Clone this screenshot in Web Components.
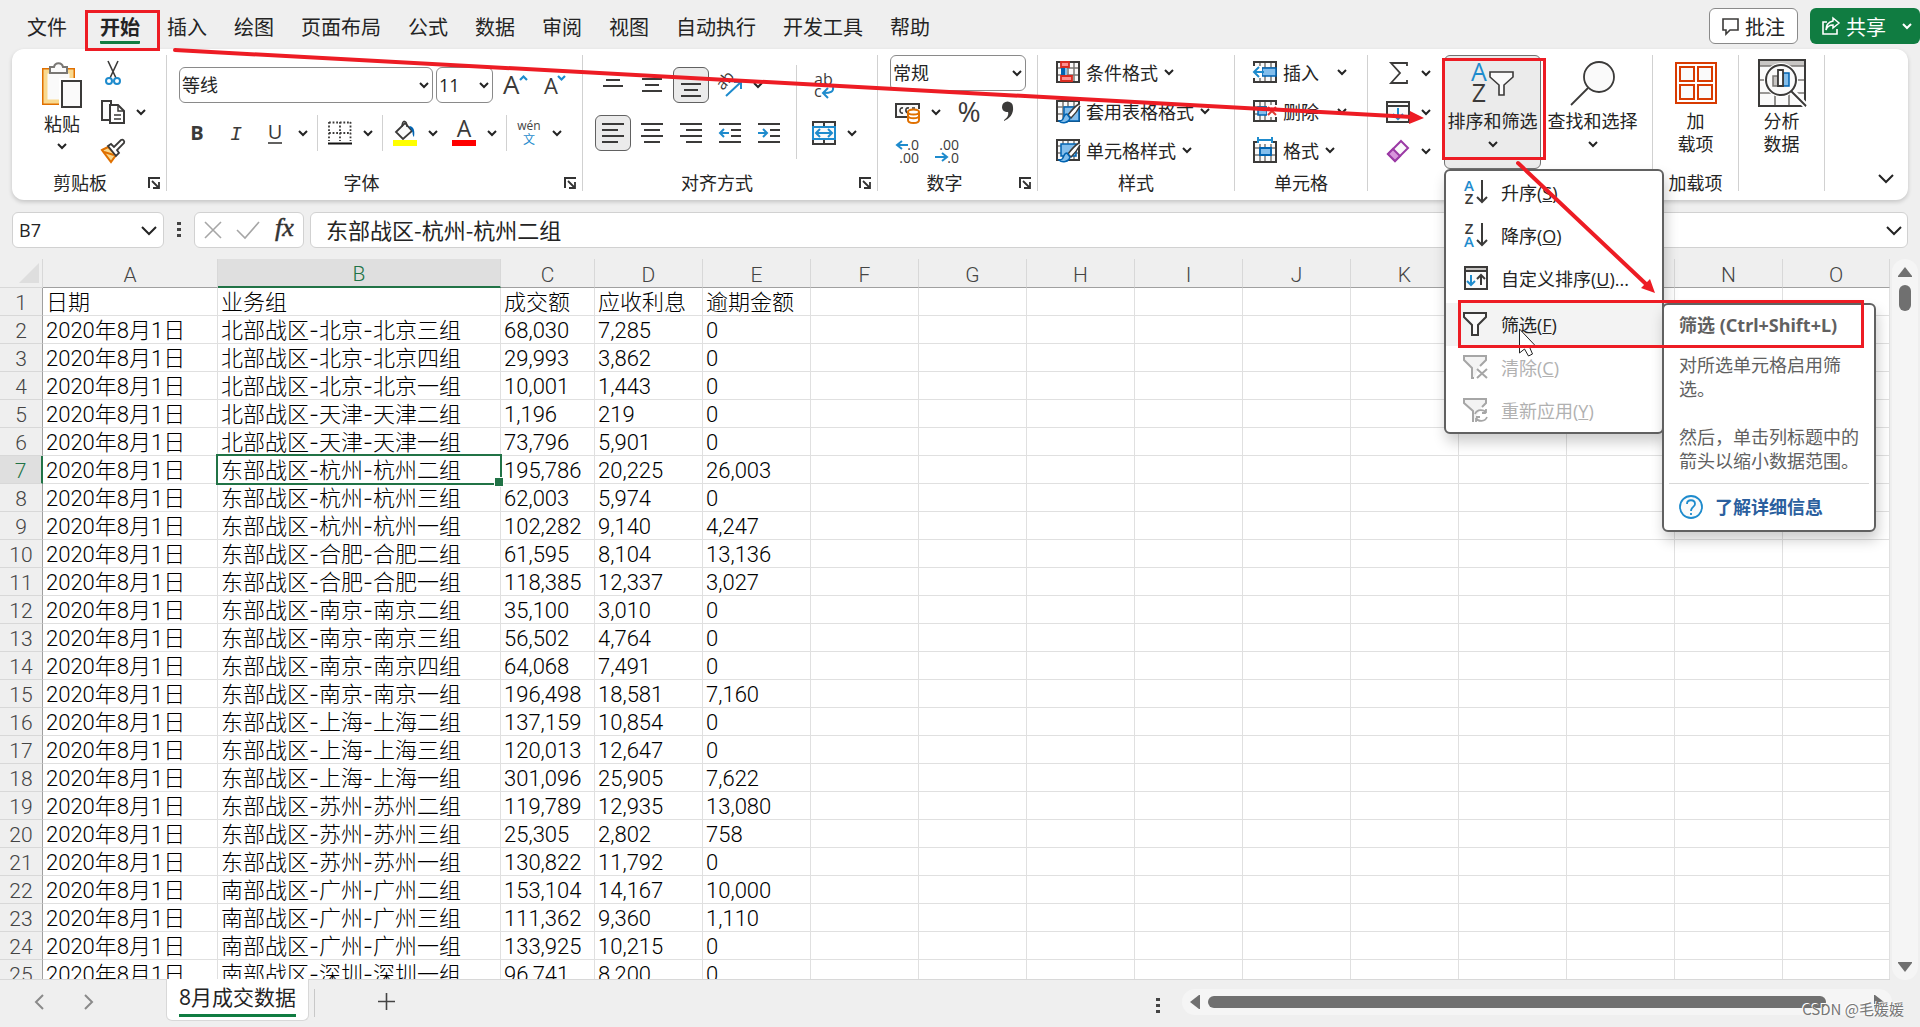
<!DOCTYPE html>
<html lang="zh-CN">
<head>
<meta charset="utf-8">
<title>8月成交数据</title>
<style>
html,body{margin:0;height:100%}
body{font-family:"Open Sans","Noto Sans CJK SC",sans-serif;font-size:18px;color:#242424;background:#efefef;overflow:hidden;
--cjk:"Noto Sans CJK SC",sans-serif;--green:#107c41}
</style>
</head>
<body>
<excel-app></excel-app>
<script>
const K='#3b3a39',B='#1e8bcd';
const grid='<path d="M1 2h22v20h-22zM1 8h22M1 15h22M7 2v20M12 2v20M18 2v20" fill="#fafafa" stroke="#797774" stroke-width="1.5"/><path d="M1 2h22v20h-22z" fill="none" stroke="#3b3a39" stroke-width="2"/>';
const brush='<path d="M23 5c-5 3-8 7-11 11l3 3c4-4 7-8 9-12" fill="#fff" stroke="#3b3a39" stroke-width="1.5"/><path d="M11 15c-3 0-3 3-4 5c-1 2-2 2-4 2c3 3 10 2 11-3z" fill="#83beec" stroke="#0063b1" stroke-width="1.5"/>';
const lines=(a)=>a.map(([x,y,w])=>`<path d="M${x} ${y}h${w}" stroke="${K}" stroke-width="2"/>`).join('');
const funnel=(c,f)=>`<path d="M1 2h22v4l-8 8v10h-6v-10l-8-8z" fill="${f}" stroke="${c}" stroke-width="2"/>`;
const down='<path d="M19 1v22M14 18l5 5l5-5" fill="none" stroke="#3b3a39" stroke-width="2"/>';
const ICONS={
chev:[10,6,'<path d="M1 1l4 4l4-4" fill="none" stroke="currentColor" stroke-width="2"/>'],
chevL:[16,9,'<path d="M1 1l7 7l7-7" fill="none" stroke="currentColor" stroke-width="2"/>'],
prev:[9,16,'<path d="M8 1l-7 7l7 7" fill="none" stroke="#8a8a8a" stroke-width="2"/>'],
next:[9,16,'<path d="M1 1l7 7l-7 7" fill="none" stroke="#8a8a8a" stroke-width="2"/>'],
plus:[17,17,'<path d="M8.500 0v17M0 8.500h17" stroke="#444" stroke-width="1.600"/>'],
dots:[4,16,'<path d="M0 0h4v3h-4zM0 6h4v3h-4zM0 12h4v3h-4z" fill="#444"/>'],
launch:[12,12,'<path d="M1 11v-10h11" fill="none" stroke="#333" stroke-width="2"/><path d="M4 4l7 7M11 5v6h-6" fill="none" stroke="#333" stroke-width="1.800"/>'],
paste:[42,46,'<path d="M2 7h31v35h-31z" fill="#fff" stroke="#e07000" stroke-width="2"/><path d="M4.500 9.500h26v30h-26z" fill="#fafafa" stroke="#f9d98f" stroke-width="4"/><path d="M9 11v-6h4c1-5 8-5 9 0h4v6z" fill="#fafafa" stroke="#797774" stroke-width="2"/><path d="M18 16h24v30h-24z" fill="#fff"/><path d="M21 19h19v26h-19z" fill="#fafafa" stroke="#3b3a39" stroke-width="2"/>'],
cut:[16,24,'<path d="M3 0l8 17M13 0l-8 17" stroke="#3b3a39" stroke-width="1.600" fill="none"/><circle cx="4" cy="20" r="3" fill="none" stroke="#1e8bcd" stroke-width="2"/><circle cx="12" cy="20" r="3" fill="none" stroke="#1e8bcd" stroke-width="2"/>'],
copy:[24,24,'<path d="M8 20h-7v-19h9v3" fill="#fafafa" stroke="#3b3a39" stroke-width="2"/><path d="M9 5h8l6 6v12h-14z" fill="#fff" stroke="#3b3a39" stroke-width="2"/><path d="M17 5v6h6M13 15h7M13 19h7" fill="none" stroke="#3b3a39" stroke-width="1.500"/>'],
brush:[24,24,'<path d="M1 11l6-3l8 8l-5 7z" fill="#f9d98f" stroke="#e07000" stroke-width="2"/><path d="M3 13l10 3" stroke="#e07000" stroke-width="2"/><path d="M7 7l3-2l3 3l7-7c2-1 4 1 3 3l-7 7l2 3l-3 3z" fill="#fff" stroke="#3b3a39" stroke-width="1.800"/>'],
growA:[24,26,'<text x="1" y="22" font-size="26" fill="#3b3a39">A</text><path d="M18 8l3.500-3.500l3.500 3.500" fill="none" stroke="#1e8bcd" stroke-width="2.200"/>'],
shrinkA:[24,26,'<text x="3" y="22" font-size="22" fill="#3b3a39">A</text><path d="M17 4l3.500 3.500l3.500-3.500" fill="none" stroke="#1e8bcd" stroke-width="2.200"/>'],
bold:[24,24,'<text x="12" y="19" font-size="20" font-weight="700" text-anchor="middle" fill="#3b3a39">B</text>'],
italic:[24,24,'<text x="12" y="19" font-size="20" font-style="italic" font-family="Liberation Mono" text-anchor="middle" fill="#3b3a39">I</text>'],
under:[24,26,'<text x="12" y="19" font-size="20" text-anchor="middle" fill="#3b3a39">U</text><path d="M5 23h14" stroke="#3b3a39" stroke-width="1.600"/>'],
border:[24,24,'<path d="M1 1.500h22M1 12h22M1 1v19M12 1v19M22.500 1v19" stroke="#3b3a39" stroke-width="1.800" stroke-dasharray="1.800 1.800" fill="none"/><path d="M0 22.500h24" stroke="#111" stroke-width="2"/>'],
fill:[26,26,'<path d="M4 12l9-9l7 8l-9 8z" fill="#fafafa" stroke="#3b3a39" stroke-width="1.800"/><path d="M10 7c0-8 5-7 5 0" fill="none" stroke="#3b3a39" stroke-width="1.500"/><path d="M17 6c5 0 6 5 5 11c-2-2-1-5-2-6z" fill="#0063b1"/><path d="M1 20h24v6h-24z" fill="#ff0"/>'],
fontA:[26,26,'<text x="13" y="17" font-size="23" text-anchor="middle" fill="#3b3a39">A</text><path d="M1 20h24v6h-24z" fill="red"/>'],
wen:[26,28,'<text x="13" y="11" font-size="12" text-anchor="middle" fill="#444">wén</text><text x="13" y="25" font-size="12" text-anchor="middle" fill="#1e8bcd">文</text>'],
aTop:[24,24,lines([[2,1,20],[5,7,14],[2,13,20]])],
aMid:[24,24,lines([[2,6,20],[5,12,14],[2,18,20]])],
aBot:[24,24,lines([[2,11,20],[5,17,14],[2,23,20]])],
aLeft:[24,24,lines([[1,3,22],[1,9,16],[1,15,22],[1,21,16]])],
aCen:[24,24,lines([[1,3,22],[4,9,16],[1,15,22],[4,21,16]])],
aRight:[24,24,lines([[1,3,22],[7,9,16],[1,15,22],[7,21,16]])],
outd:[24,24,lines([[1,3,22],[13,9,10],[13,15,10],[1,21,22]])+'<path d="M11 12h-9M6 8l-4 4l4 4" fill="none" stroke="#1e8bcd" stroke-width="2"/>'],
ind:[24,24,lines([[1,3,22],[13,9,10],[13,15,10],[1,21,22]])+'<path d="M1 12h9M6 8l4 4l-4 4" fill="none" stroke="#1e8bcd" stroke-width="2"/>'],
orient:[26,26,'<text x="0" y="0" font-size="16" transform="translate(6 19) rotate(-50)" fill="#3b3a39">ab</text><path d="M9 24l15-14M17 10h7v7" fill="none" stroke="#1e8bcd" stroke-width="2"/>'],
wrap:[24,28,'<text x="2" y="14" font-size="16" fill="#3b3a39">ab</text><text x="2" y="26" font-size="16" fill="#3b3a39">c</text><path d="M21 16c1 5-3 6-9 6M16 17l-5 5l5 5" fill="none" stroke="#1e8bcd" stroke-width="2"/>'],
merge:[24,24,'<path d="M1 1h22v22h-22zM12 1v4M12 19v4" fill="#fafafa" stroke="#3b3a39" stroke-width="2"/><path d="M1 6h22v12h-22z" fill="#fafafa" stroke="#1e8bcd" stroke-width="2"/><path d="M5 12h14M8 8l-4 4l4 4M16 8l4 4l-4 4" fill="none" stroke="#1e8bcd" stroke-width="2"/>'],
money:[26,24,'<path d="M12 17h-11v-13h23v5" fill="#fafafa" stroke="#3b3a39" stroke-width="2"/><path d="M8 8c-4-1-4 6 0 5M13 13c-3-1-3-6 1-5M20 8h-3" fill="none" stroke="#3b3a39" stroke-width="1.600"/><path d="M13 12v8c0 4 11 4 11 0v-8" fill="#fff" stroke="#e07000" stroke-width="2"/><ellipse cx="18.500" cy="12" rx="5.500" ry="2.500" fill="#fff" stroke="#e07000" stroke-width="2"/><path d="M13 16c1 3 10 3 11 0" fill="none" stroke="#e07000" stroke-width="2"/>'],
pct:[28,26,'<text x="16" y="23" font-size="28" text-anchor="middle" fill="#3b3a39">%</text>'],
comma:[14,22,'<path d="M3 6a5 5 0 0 1 11 0c1 7-4 12-9 14v-1c3-2 5-5 4-8c-4 0-6-2-6-5z" fill="#3b3a39"/>'],
dec1:[26,26,'<path d="M13 7h-11M7 3l-5 4l5 4" fill="none" stroke="#1e8bcd" stroke-width="2"/><text x="24" y="12" font-size="14" text-anchor="end" fill="#3b3a39">.0</text><text x="24" y="25" font-size="14" text-anchor="end" fill="#3b3a39">.00</text>'],
dec2:[26,26,'<path d="M1 19h12M8 15l5 4l-5 4" fill="none" stroke="#1e8bcd" stroke-width="2"/><text x="25" y="12" font-size="14" text-anchor="end" fill="#3b3a39">.00</text><text x="25" y="25" font-size="14" text-anchor="end" fill="#3b3a39">.0</text>'],
cond:[24,24,grid+'<path d="M5 8h6v7h-6z" fill="#83beec"/><path d="M5 8h4v7h-4z" fill="#0063b1"/><path d="M5 2h8v5h-8zM5 16h11v5h-11z" fill="#ff8f8f" stroke="#d92c20" stroke-width="1.800"/>'],
tblfmt:[25,24,grid+'<path d="M8 8h15v14h-15z" fill="#83beec" stroke="#0063b1" stroke-width="1.500"/>'+brush],
cellfmt:[25,24,grid+'<path d="M5 6h15v12h-15z" fill="#83beec" stroke="#0063b1" stroke-width="1.500"/>'+brush],
ins:[24,24,grid+'<path d="M9 8h14v8h-14z" fill="#83beec" stroke="#0063b1" stroke-width="1.500"/><path d="M0 6h9v12h-9z" fill="#fff"/><path d="M11 12h-10M6 7l-5 5l5 5" fill="none" stroke="#1e8bcd" stroke-width="2"/>'],
del:[24,24,grid+'<path d="M5 8h9v8h-9z" fill="#83beec" stroke="#0063b1" stroke-width="1.500"/><path d="M14 6h10v12h-10z" fill="#fff"/><path d="M15 8l8 8M23 8l-8 8" stroke="#e03a32" stroke-width="2"/>'],
fmt:[24,26,'<g transform="translate(0 3)">'+grid+'<path d="M7 8h11v7h-11z" fill="#83beec" stroke="#0063b1" stroke-width="1.800"/></g><path d="M4 0h16v7h-16z" fill="#fff"/><path d="M5 0v6M19 0v6M5 3h14" fill="none" stroke="#1e8bcd" stroke-width="2"/>'],
sum:[20,22,'<path d="M19 4v-3h-16l9 10l-9 10h16v-3" fill="none" stroke="#3b3a39" stroke-width="1.800"/>'],
filld:[24,22,'<path d="M1 1h22v20h-22zM1 5h22" fill="#fafafa" stroke="#3b3a39" stroke-width="2"/><path d="M12 7v11M7 13l5 5l5-5" fill="none" stroke="#1e8bcd" stroke-width="2"/>'],
erase:[24,24,'<path d="M15 2l7 7l-13 13l-7-7z" fill="#fafafa" stroke="#9b3aa5" stroke-width="2"/><path d="M7 10l7 7l-5 5l-7-7z" fill="#d895dc" stroke="#9b3aa5" stroke-width="2"/>'],
sort:[44,44,'<text x="8" y="20" font-size="25" text-anchor="middle" fill="#1e8bcd">A</text><text x="8" y="41" font-size="25" text-anchor="middle" fill="#3b3a39">Z</text><path d="M19 11h23v5l-9 8v10h-5v-10l-9-8z" fill="#fafafa" stroke="#3b3a39" stroke-width="1.600"/>'],
find:[46,46,'<circle cx="29" cy="17" r="15" fill="#fafafa" stroke="#3b3a39" stroke-width="1.800"/><path d="M18 28l-17 17" stroke="#3b3a39" stroke-width="1.800"/>'],
addin:[42,42,'<path d="M1 1h40v40h-40z" fill="#fff" stroke="#d83b01" stroke-width="2"/><path d="M5 5h14v14h-14zM23 5h14v14h-14zM5 23h14v14h-14zM23 23h14v14h-14z" fill="#fafafa" stroke="#d83b01" stroke-width="2"/>'],
analyze:[48,48,'<path d="M1 1h46v46h-46z" fill="#fafafa"/><path d="M1 1h46v6h-46z" fill="#c8c6c4"/><path d="M1 7h46M1 21h46M1 34h46M17 34v13M31 34v13" stroke="#797774" stroke-width="1.600" fill="none"/><path d="M1 1h46v46h-46z" fill="none" stroke="#3b3a39" stroke-width="2"/><circle cx="23" cy="21" r="17" fill="#fff"/><path d="M33 31l15 16" stroke="#fff" stroke-width="6"/><circle cx="23" cy="21" r="15" fill="#fafafa" stroke="#3b3a39" stroke-width="2"/><path d="M33 32l15 15" stroke="#3b3a39" stroke-width="2"/><path d="M15 17h5v10h-5z" fill="#c8c6c4" stroke="#797774" stroke-width="1.500"/><path d="M25 14h6v13h-6z" fill="#83beec" stroke="#0063b1" stroke-width="1.500"/><path d="M20 11h5v16h-5z" fill="#fff" stroke="#3b3a39" stroke-width="1.800"/>'],
note:[17,17,'<path d="M1 1h15v11h-8l-4 4v-4h-3z" fill="none" stroke="#3b3a39" stroke-width="1.600"/>'],
share:[18,18,'<path d="M5 5h-4v12h14v-5" fill="none" stroke="#fff" stroke-width="1.600"/><path d="M11 1l6 5l-6 5v-3c-4 0-6 2-7 5c0-5 3-8 7-9z" fill="none" stroke="#fff" stroke-width="1.500"/>'],
asc:[26,26,'<text x="6" y="12" font-size="15" font-weight="600" text-anchor="middle" fill="#1e8bcd">A</text><text x="6" y="25" font-size="15" font-weight="600" text-anchor="middle" fill="#3b3a39">Z</text>'+down],
desc:[26,26,'<text x="6" y="12" font-size="15" font-weight="600" text-anchor="middle" fill="#3b3a39">Z</text><text x="6" y="25" font-size="15" font-weight="600" text-anchor="middle" fill="#1e8bcd">A</text>'+down],
custom:[26,26,'<path d="M2 2h22v22h-22z" fill="#fafafa"/><path d="M2 2h22v4h-22z" fill="#c8c6c4"/><path d="M2 2h22v22h-22zM2 6h22" fill="none" stroke="#3b3a39" stroke-width="2"/><path d="M8 10v10M4 16l4 4l4-4" fill="none" stroke="#1e8bcd" stroke-width="2"/><path d="M18 20v-10M14 14l4-4l4 4" fill="none" stroke="#3b3a39" stroke-width="2"/>'],
filter:[26,26,funnel(K,'#fafafa')],
clear:[26,26,'<path d="M11 24h-2v-10l-8-8v-4h22v4l-6 6" fill="#f3f3f3" stroke="#a6a6a6" stroke-width="2"/><path d="M14 15l10 9M24 15l-10 9" stroke="#a6a6a6" stroke-width="2"/>'],
reapply:[26,26,'<path d="M10 25v-11l-9-8v-4h22v4l-4 4" fill="#f3f3f3" stroke="#a6a6a6" stroke-width="2"/><path d="M12 17c2-5 9-5 11-1v-4M23 16h-4M24 20c-2 5-9 5-11 1v4M13 20h4" fill="none" stroke="#a6a6a6" stroke-width="1.800"/>'],
help:[24,24,'<circle cx="12" cy="12" r="11" fill="#fafafa" stroke="#1e8bcd" stroke-width="1.800"/><path d="M8 9c0-5 8-5 8 0c0 3-4 3-4 7M12 18v2" fill="none" stroke="#1e8bcd" stroke-width="1.800"/>'],
cross:[18,18,'<path d="M1 1l16 16M17 1l-16 16" stroke="#a6a6a6" stroke-width="1.600"/>'],
check:[24,18,'<path d="M1 9l8 8l14-16" fill="none" stroke="#a6a6a6" stroke-width="1.600"/>'],
fx:[22,26,'<text x="1" y="19" font-size="26" font-style="italic" font-family="Liberation Serif" fill="#333" stroke="#333" stroke-width=".5">fx</text>'],
up:[14,10,'<path d="M7 0l7 9v1h-14v-1z" fill="#707070"/>'],
dn:[14,10,'<path d="M7 10l7-9v-1h-14v1z" fill="#707070"/>'],
lf:[10,14,'<path d="M0 7l9-7h1v14h-1z" fill="#707070"/>'],
rt:[10,14,'<path d="M10 7l-9-7h-1v14h1z" fill="#707070"/>'],
selall:[20,20,'<path d="M20 0v20h-20z" fill="#dedede"/>']
};
function define(name,render){
  customElements.define(name,class extends HTMLElement{
    connectedCallback(){
      if(this.shadowRoot)return;
      this.attachShadow({mode:'open'}).innerHTML=render(this);
    }
  });
}
const ic=(n)=>`<ui-icon name="${n}"></ui-icon>`;
const base='button{font:inherit;color:inherit;background:none;border:0;padding:0;margin:0;display:flex;align-items:center;justify-content:center}*{box-sizing:border-box}';

define('ui-icon',el=>{
  const [w,h,body]=ICONS[el.getAttribute('name')];
  return `<style>:host{display:inline-flex;flex:none}svg{display:block;overflow:visible}</style><svg width="${w}" height="${h}" viewBox="0 0 ${w} ${h}" aria-hidden="true">${body}</svg>`;
});

/* A square command button, with an optional drop-down arrow beside it. */
define('tool-button',el=>`<style>${base}:host{display:flex;height:36px}
.main{width:36px;border-radius:6px;border:1px solid transparent}
.main[aria-pressed=true]{background:#ebebeb;border-color:#616161}
.more{width:20px}</style>
<button class="main" aria-label="${el.title}" aria-pressed="${el.hasAttribute('pressed')}">${ic(el.getAttribute('icon'))}</button>${el.hasAttribute('more')?`<button class="more" aria-label="更多">${ic('chev')}</button>`:''}`);

/* A command with its caption to the right of the icon. */
define('row-button',el=>`<style>${base}:host{display:flex;height:36px}
button{padding:0 6px 2px;gap:6px;white-space:nowrap;justify-content:flex-start}
:host([wide]) button{width:106px}:host([wide]) .c{margin-left:auto}
.i{width:24px;display:flex;justify-content:center}.c{display:flex}</style>
<button><span class="i">${ic(el.getAttribute('icon'))}</span><slot></slot><span class="c">${ic('chev')}</span></button>`);

/* A tall command with its caption below the icon. */
define('big-button',el=>`<style>${base}:host{display:flex}
button{flex-direction:column;justify-content:flex-start;width:97px;height:114px;border:1px solid transparent;border-radius:6px;line-height:23px;text-align:center;white-space:nowrap}
.i{height:48px;margin:3px 0;display:flex;align-items:center}
:host([active]) button{background:#ebebeb;border-color:#717171}
ui-icon.c{margin-top:8px}:host([slim]) button{width:50px}</style>
<button><span class="i">${ic(el.getAttribute('icon'))}</span><span><slot></slot></span>${el.hasAttribute('more')?'<ui-icon class="c" name="chev"></ui-icon>':''}</button>`);

define('ribbon-group',el=>`<style>${base}:host{display:flex;flex-direction:column;height:136px;border-right:1px solid #d1d1d1;box-sizing:border-box;flex:none}
.b{flex:1;display:flex;min-height:0}.f{display:flex;height:16px;line-height:16px;align-items:center}
.f span{flex:1;text-align:center}.f button{width:26px;padding-left:2px}</style>
<div class="b"><slot></slot></div>
<div class="f"><span>${el.getAttribute('label')||''}</span>${el.hasAttribute('launch')?`<button aria-label="对话框">${ic('launch')}</button>`:''}</div>`);

define('combo-box',el=>`<style>*{box-sizing:border-box}:host{display:block}
label{display:grid;align-items:center;height:36px;border:1px solid #8a8a8a;border-radius:6px;background:#fff}
select{grid-area:1/1;appearance:none;font:inherit;color:inherit;border:0;background:none;width:100%;height:34px;padding:0 2px;outline:0}
ui-icon{grid-area:1/1;justify-self:end;margin-right:3px;pointer-events:none}</style>
<label><select aria-label="${el.getAttribute('name')}"><option>${el.getAttribute('value')}</option></select>${ic('chev')}</label>`);

define('tab-bar',()=>`<style>${base}:host{display:flex;height:49px;align-items:flex-start;justify-content:space-between;font-size:20px}
nav{display:flex;gap:27px;padding:12px 27px}nav button{height:32px;line-height:30px;border-bottom:3px solid transparent;padding-top:2px}
nav button.on{font-weight:700;border-color:var(--green);border-radius:1px;margin-left:6px}
.r{display:flex;gap:12px;padding-top:8px}.r button{height:36px;border-radius:6px;gap:6px;padding:0 12px}
.n{border:1px solid #8a8a8a;background:#fff}.r .s{background:var(--green);color:#fff;width:110px;padding:0 8px 0 12px}.s ui-icon:last-child{margin-left:auto}</style>
<nav>${['文件','开始','插入','绘图','页面布局','公式','数据','审阅','视图','自动执行','开发工具','帮助'].map(t=>`<button class="${t==='开始'?'on':''}">${t}</button>`).join('')}</nav>
<div class="r"><button class="n">${ic('note')}批注</button><button class="s">${ic('share')}共享${ic('chev')}</button></div>`);

define('ribbon-bar',()=>`<style>${base}:host{display:flex;margin:0 12px;height:151px;padding:6px 8px 0;box-sizing:border-box;background:#fff;border-radius:12px;box-shadow:0 2px 4px rgba(0,0,0,.18);position:relative;z-index:5}
.col{display:flex;flex-direction:column}.row{display:flex;gap:3px}
.two{gap:12px;padding:12px 0 0 12px}.three{gap:3px}.pl{padding-left:12px}.flush{padding-left:0}
.v{width:1px;background:#d1d1d1;margin:0 1px}
.clip{width:147px}.font{width:416px}.align{width:295px}.num{width:160px}.style{width:197px}.cell{width:133px}.edit{width:285px}.one{width:86px}
.paste{flex-direction:column;width:60px;height:114px;margin:0 3px 0 12px;justify-content:flex-start;padding-top:7px;line-height:32px}
.paste ui-icon:last-child{margin-top:3px}
.c1{width:254px}.c2{width:57px}.c3{width:136px}
.tall{height:94px;margin:10px 9px 0}
.anchor{position:relative;margin:0 3px 0 8px}
.anchor drop-menu{position:absolute;left:0;top:114px}
.mid{display:flex;flex:1;justify-content:center}
.end{margin:119px 6px 0 auto;height:9px}</style>
<ribbon-group class="clip" label="剪贴板" launch>
 <button class="paste">${ic('paste')}<span>粘贴</span>${ic('chev')}</button>
 <div class="col three"><tool-button icon="cut" title="剪切"></tool-button><tool-button icon="copy" title="复制" more></tool-button><tool-button icon="brush" title="格式刷"></tool-button></div>
</ribbon-group>
<ribbon-group class="font" label="字体" launch><div class="col two">
 <div class="row"><combo-box class="c1" name="字体" value="等线"></combo-box><combo-box class="c2" name="字号" value="11"></combo-box><tool-button icon="growA" title="增大字号"></tool-button><tool-button icon="shrinkA" title="减小字号"></tool-button></div>
 <div class="row"><tool-button icon="bold" title="加粗"></tool-button><tool-button icon="italic" title="倾斜"></tool-button><tool-button icon="under" title="下划线" more></tool-button><span class="v"></span><tool-button icon="border" title="边框" more></tool-button><span class="v"></span><tool-button icon="fill" title="填充颜色" more></tool-button><tool-button icon="fontA" title="字体颜色" more></tool-button><span class="v"></span><tool-button icon="wen" title="拼音" more></tool-button></div>
</div></ribbon-group>
<ribbon-group class="align" label="对齐方式" launch>
 <div class="col two"><div class="row"><tool-button icon="aTop" title="顶端对齐"></tool-button><tool-button icon="aMid" title="垂直居中"></tool-button><tool-button icon="aBot" title="底端对齐" pressed></tool-button><tool-button icon="orient" title="方向" more></tool-button></div>
 <div class="row"><tool-button icon="aLeft" title="左对齐" pressed></tool-button><tool-button icon="aCen" title="居中"></tool-button><tool-button icon="aRight" title="右对齐"></tool-button><tool-button icon="outd" title="减少缩进"></tool-button><tool-button icon="ind" title="增加缩进"></tool-button></div></div>
 <span class="v tall"></span>
 <div class="col two flush"><tool-button icon="wrap" title="自动换行"></tool-button><tool-button icon="merge" title="合并后居中" more></tool-button></div>
</ribbon-group>
<ribbon-group class="num" label="数字" launch><div class="col three pl">
 <combo-box class="c3" name="数字格式" value="常规"></combo-box>
 <div class="row"><tool-button icon="money" title="会计格式" more></tool-button><tool-button icon="pct" title="百分比"></tool-button><tool-button icon="comma" title="千位分隔"></tool-button></div>
 <div class="row"><tool-button icon="dec1" title="增加小数位"></tool-button><tool-button icon="dec2" title="减少小数位"></tool-button></div>
</div></ribbon-group>
<ribbon-group class="style" label="样式"><div class="col three pl"><row-button icon="cond">条件格式</row-button><row-button icon="tblfmt">套用表格格式</row-button><row-button icon="cellfmt">单元格样式</row-button></div></ribbon-group>
<ribbon-group class="cell" label="单元格"><div class="col three pl"><row-button icon="ins" wide>插入</row-button><row-button icon="del" wide>删除</row-button><row-button icon="fmt">格式</row-button></div></ribbon-group>
<ribbon-group class="edit"><div class="col three pl"><tool-button icon="sum" title="求和" more></tool-button><tool-button icon="filld" title="填充" more></tool-button><tool-button icon="erase" title="清除" more></tool-button></div>
 <div class="anchor"><big-button icon="sort" active more>排序和筛选</big-button><drop-menu></drop-menu></div><big-button icon="find" more>查找和选择</big-button></ribbon-group>
<ribbon-group class="one" label="加载项"><div class="mid"><big-button icon="addin" slim>加<br>载项</big-button></div></ribbon-group>
<ribbon-group class="one"><div class="mid"><big-button icon="analyze" slim>分析<br>数据</big-button></div></ribbon-group>
<button class="end" aria-label="折叠功能区">${ic('chevL')}</button>`);

const MENU=[['asc','升序','S'],['desc','降序','O'],['custom','自定义排序','U','...'],['filter','筛选','F'],['clear','清除','C'],['reapply','重新应用','Y']];
define('drop-menu',()=>`<style>${base}:host{display:block;width:220px;box-sizing:border-box;background:#fff;border:2px solid #616161;border-radius:6px;box-shadow:2px 8px 14px rgba(0,0,0,.2)}
button{width:100%;height:43px;padding:0 0 2px 17px;gap:12px;justify-content:flex-start}
.hot{margin-top:3px;background:#f3f3f3}button:disabled{color:#b1b1b1}
tip-card{position:absolute;left:216px;top:132px}</style>
${MENU.map(([i,t,k,e],n)=>`<button class="${i==='filter'?'hot':''}" ${n>3?'disabled':''}>${ic(i)}<span>${t}(<u>${k}</u>)${e||''}</span></button>`).join('')}
<tip-card></tip-card>`);

define('tip-card',()=>`<style>:host{display:block;width:214px;box-sizing:border-box;background:#fff;border:2px solid #616161;border-radius:6px;box-shadow:2px 8px 14px rgba(0,0,0,.2);color:#616161;padding:8px 5px 11px;line-height:24px}
h2,p{margin:0 9px 16px 10px;font-size:18px}h2{font-family:"Noto Sans","Noto Sans CJK SC",sans-serif;font-weight:700;white-space:nowrap}p{margin-bottom:24px}p:last-of-type{margin-bottom:10px}
a{display:flex;align-items:center;gap:12px;border-top:1px solid #d8d8d8;padding:11px 10px 0;font-weight:700;color:#2b5f9e;text-decoration:none}</style>
<h2>筛选 (Ctrl+Shift+L)</h2><p>对所选单元格启用筛选。</p><p>然后，单击列标题中的箭头以缩小数据范围。</p><a href="#help">${ic('help')}了解详细信息</a>`);

define('formula-bar',()=>`<style>${base}:host{display:flex;align-items:center;padding:12px 12px 11px}
.box{display:flex;align-items:center;height:36px;background:#fff;border:1px solid #d1d1d1;border-radius:6px}
input{font:inherit;color:inherit;border:0;background:none;outline:0;padding:0;min-width:0;flex:1}
.name{width:152px;padding:0 6px}.d{width:30px;display:flex;justify-content:center}
.fx{width:110px;justify-content:space-between;padding:0 7px 0 9px}
.f{flex:1;margin-left:6px;padding:0 5px 0 15px;justify-content:space-between}.f input{flex:0 1 50%;font:22px var(--cjk);height:34px;padding-bottom:3px}</style>
<div class="box name"><input aria-label="名称框" value="B7">${ic('chevL')}</div><span class="d">${ic('dots')}</span>
<div class="box fx"><button aria-label="取消">${ic('cross')}</button><button aria-label="输入">${ic('check')}</button><button aria-label="插入函数">${ic('fx')}</button></div>
<div class="box f"><input aria-label="编辑栏" value="东部战区-杭州-杭州二组">${ic('chevL')}</div>`);

const ROWS=`北部战区-北京-北京三组|68,030|7,285|0
北部战区-北京-北京四组|29,993|3,862|0
北部战区-北京-北京一组|10,001|1,443|0
北部战区-天津-天津二组|1,196|219|0
北部战区-天津-天津一组|73,796|5,901|0
东部战区-杭州-杭州二组|195,786|20,225|26,003
东部战区-杭州-杭州三组|62,003|5,974|0
东部战区-杭州-杭州一组|102,282|9,140|4,247
东部战区-合肥-合肥二组|61,595|8,104|13,136
东部战区-合肥-合肥一组|118,385|12,337|3,027
东部战区-南京-南京二组|35,100|3,010|0
东部战区-南京-南京三组|56,502|4,764|0
东部战区-南京-南京四组|64,068|7,491|0
东部战区-南京-南京一组|196,498|18,581|7,160
东部战区-上海-上海二组|137,159|10,854|0
东部战区-上海-上海三组|120,013|12,647|0
东部战区-上海-上海一组|301,096|25,905|7,622
东部战区-苏州-苏州二组|119,789|12,935|13,080
东部战区-苏州-苏州三组|25,305|2,802|758
东部战区-苏州-苏州一组|130,822|11,792|0
南部战区-广州-广州二组|153,104|14,167|10,000
南部战区-广州-广州三组|111,362|9,360|1,110
南部战区-广州-广州一组|133,925|10,215|0
南部战区-深圳-深圳一组|96,741|8,200|0`.split('\n').map(r=>['2020年8月1日',...r.split('|')]);
const COLS='ABCDEFGHIJKLMNO'.split('');
const W=[175,283,94,108,108,108,108,108,108,108,108,108,108,108];
define('sheet-grid',()=>{
  const all=[['日期','业务组','成交额','应收利息','逾期金额'],...ROWS];
  return `<style>*{box-sizing:border-box}:host{display:block;overflow:hidden;min-height:0;font:300 22px Roboto,var(--cjk);color:#000;border-bottom:1px solid #d8d8d8}
table{table-layout:fixed;width:100%;border-spacing:0}
th,td{height:28px;padding:2px 0 0 3px;line-height:25px;white-space:nowrap;text-align:left;font-weight:300;border-right:1px solid #e0e0e0;border-bottom:1px solid #e0e0e0}
td{background:#fff}td:nth-child(3){font-family:Inter,var(--cjk)}
th{background:#efefef;color:#444;text-align:center;padding:3px 0 0;line-height:24px;font-size:21px}
thead th{border-bottom-color:#a0a0a0;border-right-color:#d8d8d8}tbody th{border-right-color:#a0a0a0;border-bottom-color:#d8d8d8}
thead th:first-child{border-right-color:#d8d8d8;border-bottom-color:#d8d8d8;padding:0 3px 0 0;text-align:right;line-height:0}
thead .on{background:#dfdfdf;color:#217346;border-bottom:2px solid #217346}
tbody .on{background:#dfdfdf;color:#217346;border-right:2px solid #217346}
td.sel{position:relative}
.sel::before{content:"";position:absolute;inset:-2px;border:2px solid #217346;z-index:1}
.sel::after{content:"";position:absolute;right:-4px;bottom:-4px;width:8px;height:8px;background:#217346;border:1px solid #fff;z-index:2}</style>
<table><colgroup><col style="width:43px">${W.map(w=>`<col style="width:${w}px">`).join('')}<col></colgroup>
<thead><tr><th aria-label="全选">${ic('selall')}</th>${COLS.map(c=>`<th class="${c==='B'?'on':''}">${c}</th>`).join('')}</tr></thead>
<tbody>${all.map((r,i)=>`<tr><th class="${i===6?'on':''}">${i+1}</th>${COLS.map((c,j)=>`<td${i===6&&j===1?' class="sel"':''}>${r[j]||''}</td>`).join('')}</tr>`).join('')}</tbody></table>`;
});

define('scroll-track',el=>`<style>:host{display:flex;align-items:center;background:#f5f5f5;border-radius:13px;box-sizing:border-box}
i{background:#707070;border-radius:6px;flex:none}
:host([dir=v]){flex-direction:column;width:26px;padding:8px 0}:host([dir=h]){height:26px;padding:0 8px}
:host([dir=v]) i{width:12px;height:26px;margin:8px 0 auto}:host([dir=h]) i{height:12px;width:89%;margin:0 auto 0 8px}</style>
${ic(el.getAttribute('dir')==='v'?'up':'lf')}<i></i>${ic(el.getAttribute('dir')==='v'?'dn':'rt')}`);

define('sheet-tabs',()=>`<style>${base}:host{display:flex;height:47px;align-items:flex-start}
.nav{display:flex;gap:40px;padding:14px 0 0 35px;width:166px}
.tab{width:143px;height:42px;margin-top:-1px;background:#fff;border:1px solid #d8d8d8;border-top:0;border-radius:0 0 6px 6px;font-size:21px;color:#242424;padding:0 12px 3px}
.tab span{border-bottom:3px solid var(--green);line-height:34px;height:37px;width:118px;white-space:nowrap;text-align:center}
.v{width:1px;height:28px;margin:9px 0 0 5px;background:#c8c8c8}.add{margin:13px 0 0 63px}
.more{margin:15px 22px 0 auto}scroll-track{width:37%;margin:9px 28px 0 0}
.wm{position:absolute;right:16px;bottom:8px;font:15px/20px var(--cjk);color:#777;text-shadow:-1px -1px 0 #fff}</style>
<div class="nav"><button aria-label="上一张">${ic('prev')}</button><button aria-label="下一张">${ic('next')}</button></div>
<button class="tab"><span>8月成交数据</span></button><span class="v"></span><button class="add" aria-label="新工作表">${ic('plus')}</button>
<span class="more">${ic('dots')}</span><scroll-track dir="h"></scroll-track><span class="wm">CSDN @毛媛媛</span>`);

/* Red tutorial annotations and the mouse pointer, drawn above the whole window. */
define('mark-overlay',()=>`<style>:host{position:absolute;inset:0;z-index:20;pointer-events:none}svg{display:block}</style>
<svg width="1920" height="1027" viewBox="0 0 1920 1027"><path d="M1519.500 329v24l5-4l4 7l4-2l-3-7h7z" fill="#fff" stroke="#222"/>
<g fill="none" stroke="#ed1c24" stroke-width="3"><path d="M86.500 11.500h72v38h-72zM1443.500 59.500h101v99h-101zM1459.500 301.500h403v45h-403z"/>
<path d="M175 50L1412 117M1518 163L1646 284" stroke-width="4" stroke-linecap="round"/></g>
<path d="M1424 118l-15 6l1-13zM1655 293l-14-5l9-9z" fill="#ed1c24"/></svg>`);

define('excel-app',()=>`<style>:host{display:flex;flex-direction:column;height:100vh;position:relative;overflow:hidden}
.work{flex:1;min-height:0;display:flex;gap:2px;padding-right:2px}sheet-grid{flex:1}tab-bar,ribbon-bar,formula-bar,sheet-tabs{flex:none}</style>
<tab-bar></tab-bar><ribbon-bar></ribbon-bar><formula-bar></formula-bar>
<div class="work"><sheet-grid></sheet-grid><scroll-track dir="v"></scroll-track></div>
<sheet-tabs></sheet-tabs><mark-overlay></mark-overlay>`);
</script>
</body>
</html>
